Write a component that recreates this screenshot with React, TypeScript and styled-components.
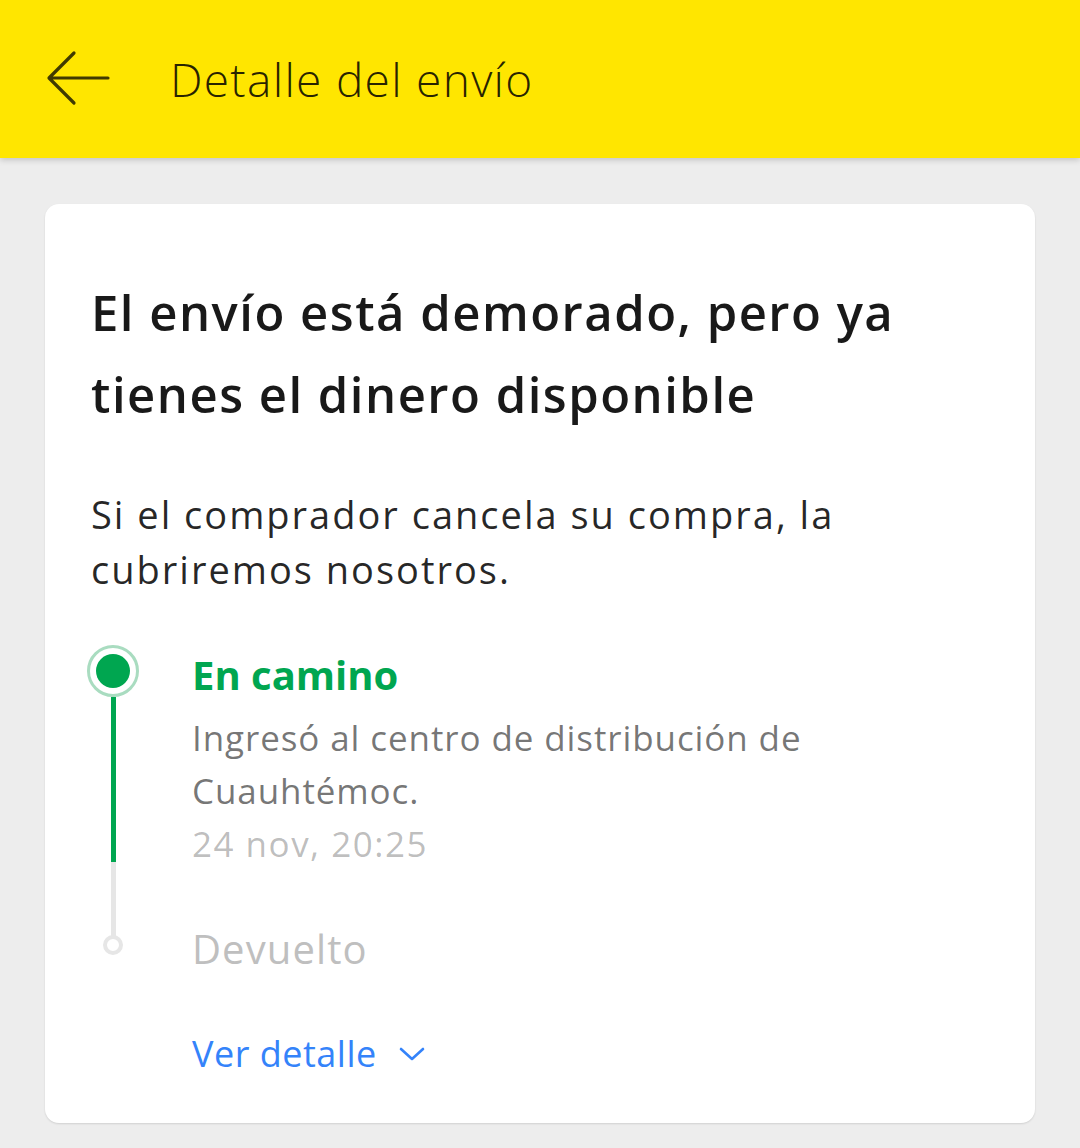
import React from 'react';
import styled, { createGlobalStyle } from 'styled-components';

const GlobalStyle = createGlobalStyle`
  html, body {
    margin: 0;
    padding: 0;
    background: #ededed;
    font-family: 'Open Sans', 'Noto Sans', Arial, sans-serif;
    -webkit-font-smoothing: antialiased;
  }
`;

const Page = styled.div`
  width: 1080px;
  min-height: 1148px;
  background: #ededed;
  overflow: hidden;
`;

const Header = styled.header`
  position: relative;
  z-index: 1;
  height: 158px;
  background: #ffe600;
  box-shadow: 0 2px 6px rgba(0, 0, 0, 0.18);
  display: flex;
  align-items: center;
  padding-left: 46px;
  box-sizing: border-box;
`;

const BackButton = styled.button`
  width: 64px;
  height: 56px;
  padding: 0;
  border: 0;
  background: none;
  display: flex;
  align-items: center;
  justify-content: center;
  margin-top: -2px;
`;

const Title = styled.h1`
  margin: 0 0 0 60px;
  font-size: 46px;
  font-weight: 300;
  color: rgba(0, 0, 0, 0.85);
  letter-spacing: 1.3px;
`;

const Content = styled.main`
  padding: 46px 45px 25px;
`;

const Card = styled.section`
  background: #fff;
  border-radius: 14px;
  box-shadow: 0 1px 2px rgba(0, 0, 0, 0.12);
  padding: 80px 46px 42px;
`;

const Headline = styled.h2`
  margin: 0;
  font-size: 49px;
  line-height: 82px;
  font-weight: 600;
  color: rgba(0, 0, 0, 0.9);
  letter-spacing: 1.5px;
  margin-top: -13px;
`;

const Lead = styled.p`
  margin: 52px 0 0;
  font-size: 38px;
  line-height: 55px;
  letter-spacing: 2px;
  color: rgba(0, 0, 0, 0.85);
`;

const Timeline = styled.ol`
  list-style: none;
  margin: 48px 0 0;
  padding: 0;
`;

const Step = styled.li`
  display: grid;
  grid-template-columns: 44px 1fr;
  column-gap: 57px;
`;

const Rail = styled.div`
  display: flex;
  flex-direction: column;
  align-items: center;
`;

const ActiveDot = styled.span`
  flex: none;
  width: 46px;
  height: 46px;
  border-radius: 50%;
  border: 3px solid #a9dcc0;
  display: flex;
  align-items: center;
  justify-content: center;
  &::after {
    content: '';
    width: 34px;
    height: 34px;
    border-radius: 50%;
    background: #00a650;
  }
`;

const PendingDot = styled.span`
  flex: none;
  width: 12px;
  height: 12px;
  border-radius: 50%;
  border: 4px solid #e6e6e6;
  margin-top: -1px;
`;

const Line = styled.span<{ $done?: boolean; $length?: number }>`
  width: 5px;
  background: ${(p) => (p.$done ? '#00a650' : '#e6e6e6')};
  height: ${(p) => (p.$length ? `${p.$length}px` : 'auto')};
  flex: ${(p) => (p.$length ? 'none' : '1')};
`;

const StepBody = styled.div<{ $last?: boolean }>`
  padding-bottom: ${(p) => (p.$last ? '0' : '58px')};
`;

const StepTitle = styled.div<{ $active?: boolean }>`
  font-size: 40px;
  line-height: 54px;
  font-weight: ${(p) => (p.$active ? 700 : 400)};
  letter-spacing: ${(p) => (p.$active ? '0' : '1.1px')};
  color: ${(p) => (p.$active ? '#00a650' : '#bfbfbf')};
  margin-top: ${(p) => (p.$active ? '3px' : '-6px')};
`;

const StepText = styled.div`
  margin-top: 9px;
  font-size: 35px;
  line-height: 53px;
  letter-spacing: 0.9px;
  color: rgba(0, 0, 0, 0.55);
`;

const StepDate = styled.div`
  font-size: 35px;
  line-height: 53px;
  letter-spacing: 1.5px;
  color: rgba(0, 0, 0, 0.27);
`;

const DetailLink = styled.a`
  display: inline-flex;
  align-items: center;
  gap: 22px;
  margin: 51px 0 0 101px;
  font-size: 36px;
  line-height: 54px;
  letter-spacing: 0.5px;
  color: #3483fa;
  text-decoration: none;
`;

const ArrowIcon = () => (
  <svg width="64" height="56" viewBox="0 0 64 56" fill="none">
    <path
      d="M62 28H4M28 3L3 28l25 25"
      stroke="rgba(0,0,0,0.75)"
      strokeWidth="3.2"
      strokeLinecap="round"
      strokeLinejoin="round"
    />
  </svg>
);

const ChevronIcon = () => (
  <svg width="26" height="16" viewBox="0 0 26 16" fill="none">
    <path d="M2 3l11 10L24 3" stroke="#3483fa" strokeWidth="2.6" strokeLinecap="round" strokeLinejoin="round" />
  </svg>
);

export default function App() {
  return (
    <Page>
      <GlobalStyle />
      <Header>
        <BackButton aria-label="Volver">
          <ArrowIcon />
        </BackButton>
        <Title>Detalle del envío</Title>
      </Header>
      <Content>
        <Card>
          <Headline>
            El envío está demorado, pero ya
            <br />
            tienes el dinero disponible
          </Headline>
          <Lead>
            Si el comprador cancela su compra, la
            <br />
            cubriremos nosotros.
          </Lead>
          <Timeline>
            <Step>
              <Rail>
                <ActiveDot />
                <Line $done $length={165} />
                <Line />
              </Rail>
              <StepBody>
                <StepTitle $active>En camino</StepTitle>
                <StepText>
                  Ingresó al centro de distribución de
                  <br />
                  Cuauhtémoc.
                </StepText>
                <StepDate>24 nov, 20:25</StepDate>
              </StepBody>
            </Step>
            <Step>
              <Rail>
                <Line $length={8} />
                <PendingDot />
              </Rail>
              <StepBody $last>
                <StepTitle>Devuelto</StepTitle>
              </StepBody>
            </Step>
          </Timeline>
          <DetailLink href="#">
            Ver detalle
            <ChevronIcon />
          </DetailLink>
        </Card>
      </Content>
    </Page>
  );
}
